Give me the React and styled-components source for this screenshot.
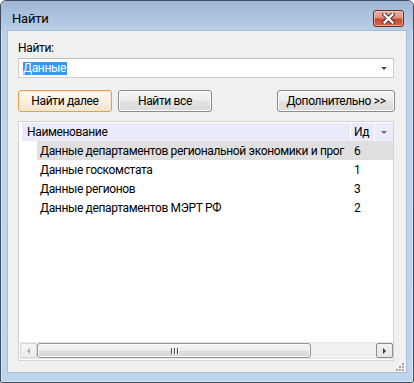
import React from 'react';
import styled, { createGlobalStyle } from 'styled-components';

const Global = createGlobalStyle`
  html, body { margin: 0; padding: 0; background: #ffffff; }
  body { font-family: Roboto, "Noto Sans", "DejaVu Sans", sans-serif; font-size: 12px; letter-spacing: -0.35px; color: #000; }
  * { box-sizing: border-box; }
`;

const Window = styled.div`
  width: 414px;
  height: 383px;
  border: 1px solid #3b4d5f;
  border-radius: 6px 6px 2px 2px;
  background: linear-gradient(#a6bdd8, #bcd3ea 40px, #bed5ec);
  box-shadow: inset 0 0 0 1px rgba(255, 255, 255, 0.45);
  display: flex;
  flex-direction: column;
  overflow: hidden;
`;

const TitleBar = styled.div`
  height: 29px;
  flex: none;
  display: flex;
  align-items: flex-start;
  justify-content: space-between;
  padding: 0 9px 0 11px;
  background: linear-gradient(#9fb7d4, #b8cfe8);
`;

const Title = styled.div`
  margin-top: 10px;
  font-size: 13px;
  line-height: 16px;
  letter-spacing: -0.2px;
  color: #000;
`;

const CloseButton = styled.div`
  margin-top: 9px;
  width: 31px;
  height: 17px;
  border: 1px solid #6b2a22;
  border-radius: 3px;
  background: linear-gradient(#ebb2a4 0%, #de8e7d 45%, #c8472f 55%, #d76a50 100%);
  box-shadow: inset 0 0 0 1px rgba(255, 215, 205, 0.55);
  display: flex;
  align-items: center;
  justify-content: center;
`;

const Frame = styled.div`
  flex: 1;
  display: flex;
  padding: 0 6px 9px 6px;
`;

const Client = styled.div`
  position: relative;
  flex: 1;
  background: #f0f0f0;
  border: 1px solid #a9bcd2;
  padding: 9px 12px 0 10px;
  display: flex;
  flex-direction: column;
`;

const Label = styled.div`
  line-height: 16px;
  height: 16px;
`;

const Combo = styled.div`
  margin-top: 2px;
  height: 20px;
  border: 1px solid #cfcfcf;
  border-top-color: #bdbdbd;
  background: #fff;
  display: flex;
  align-items: center;
  justify-content: space-between;
  padding: 0 6px 0 4px;
`;

const Selected = styled.span`
  background: #3399ff;
  color: #fff;
  line-height: 13px;
  height: 13px;
  padding: 0 1px 0 0;
`;

const Arrow = styled.span`
  width: 0;
  height: 0;
  border-left: 3px solid transparent;
  border-right: 3px solid transparent;
  border-top: 3px solid ${(p) => p.$color || '#4a4a4a'};
`;

const ButtonRow = styled.div`
  margin-top: 12px;
  display: flex;
  gap: 6px;
`;

const Button = styled.div`
  width: ${(p) => p.$w}px;
  height: 22px;
  margin-left: ${(p) => (p.$push ? 'auto' : '0')};
  margin-right: ${(p) => (p.$push ? '-1px' : '0')};
  border: 1px solid ${(p) => (p.$default ? '#e0a24e' : '#8a8a8a')};
  border-radius: 3px;
  background: ${(p) =>
    p.$default
      ? 'linear-gradient(#fdf8f0 0%, #f8efe1 50%, #f2e4cf 100%)'
      : 'linear-gradient(#f4f4f4 0%, #ececec 50%, #e2e2e2 51%, #dadada 100%)'};
  box-shadow: inset 0 0 0 1px ${(p) => (p.$default ? '#fbe7c6' : '#fbfbfb')};
  display: flex;
  align-items: center;
  justify-content: center;
  line-height: 14px;
`;

const ListBox = styled.div`
  margin-top: 9px;
  height: 240px;
  border: 1px solid #d4d4d4;
  background: #fff;
  padding-top: 1px;
  display: flex;
  flex-direction: column;
`;

const Header = styled.div`
  margin-left: 3px;
  height: 18px;
  flex: none;
  display: flex;
  gap: 1px;
`;

const HeadCell = styled.div`
  width: ${(p) => p.$w}px;
  flex: ${(p) => (p.$grow ? 1 : 'none')};
  background: #e9ebfb;
  padding-left: ${(p) => p.$pad}px;
  display: flex;
  align-items: center;
  justify-content: ${(p) => (p.$center ? 'center' : 'flex-start')};
  white-space: nowrap;
`;

const Rows = styled.div`
  flex: 1;
`;

const Row = styled.div`
  margin-left: 18px;
  height: 19px;
  display: flex;
  align-items: center;
  background: ${(p) => (p.$active ? '#e0e0e0' : 'transparent')};
`;

const NameCell = styled.div`
  width: 314px;
  flex: none;
  padding-left: 3px;
  overflow: hidden;
  white-space: nowrap;
`;

const IdCell = styled.div`
  padding-left: 3px;
`;

const ScrollBar = styled.div`
  height: 17px;
  flex: none;
  margin: 0 0 1px 1px;
  display: flex;
  background: #f0f0f0;
  border-top: 1px solid #e6e6e6;
  border-bottom: 1px solid #e6e6e6;
`;

const ScrollBtn = styled.div`
  width: 17px;
  flex: none;
  border: 1px solid ${(p) => (p.$enabled ? '#8c8c8c' : '#d6d6d6')};
  border-radius: 2px;
  background: ${(p) =>
    p.$enabled ? 'linear-gradient(#f3f3f3, #e4e4e4)' : 'linear-gradient(#f4f4f4, #ececec)'};
  display: flex;
  align-items: center;
  justify-content: center;
`;

const Thumb = styled.div`
  width: 274px;
  flex: none;
  border: 1px solid #959595;
  border-radius: 3px;
  background: linear-gradient(#f6f6f6 0%, #ececec 50%, #dedede 51%, #d8d8d8 100%);
  box-shadow: inset 0 0 0 1px #fbfbfb;
  display: flex;
  align-items: center;
  justify-content: center;
  gap: 2px;
`;

const Grip = styled.span`
  width: 1px;
  height: 6px;
  background: #4d4d4d;
  box-shadow: 1px 0 0 #fff;
`;

const Track = styled.div`
  flex: 1;
`;

const TriLeft = styled.span`
  width: 0;
  height: 0;
  border-top: 3px solid transparent;
  border-bottom: 3px solid transparent;
  border-right: 3px solid ${(p) => p.$color};
`;

const TriRight = styled.span`
  width: 0;
  height: 0;
  border-top: 3px solid transparent;
  border-bottom: 3px solid transparent;
  border-left: 3px solid ${(p) => p.$color};
`;

const SizeGrip = styled.svg`
  position: absolute;
  right: 1px;
  bottom: 0px;
`;

const rows = [
  { name: 'Данные департаментов региональной экономики и прог', id: 6, active: true },
  { name: 'Данные госкомстата', id: 1 },
  { name: 'Данные регионов', id: 3 },
  { name: 'Данные департаментов МЭРТ РФ', id: 2 },
];

export default function App() {
  const dots = [
    [8, 0], [8, 3], [5, 3], [8, 6], [5, 6], [2, 6],
  ];
  return (
    <>
      <Global />
      <Window>
        <TitleBar>
          <Title>Найти</Title>
          <CloseButton>
            <svg width="13" height="11" viewBox="0 0 13 11">
              <path d="M2.5 1.5 L10.5 9.5 M10.5 1.5 L2.5 9.5" stroke="#4b3431" strokeWidth="4.4" strokeLinecap="square" />
              <path d="M2.5 1.5 L10.5 9.5 M10.5 1.5 L2.5 9.5" stroke="#ffffff" strokeWidth="2.4" strokeLinecap="square" />
            </svg>
          </CloseButton>
        </TitleBar>
        <Frame>
          <Client>
            <Label>Найти:</Label>
            <Combo>
              <Selected>Данные</Selected>
              <Arrow />
            </Combo>
            <ButtonRow>
              <Button $w={94} $default>Найти далее</Button>
              <Button $w={94}>Найти все</Button>
              <Button $w={118} $push>Дополнительно &gt;&gt;</Button>
            </ButtonRow>
            <ListBox>
              <Header>
                <HeadCell $w={328} $pad={5}>Наименование</HeadCell>
                <HeadCell $w={23} $pad={3}>Ид</HeadCell>
                <HeadCell $w={16} $pad={0} $center $grow>
                  <Arrow $color="#6a6a6a" />
                </HeadCell>
              </Header>
              <Rows>
                {rows.map((r) => (
                  <Row key={r.id} $active={r.active}>
                    <NameCell>{r.name}</NameCell>
                    <IdCell>{r.id}</IdCell>
                  </Row>
                ))}
              </Rows>
              <ScrollBar>
                <ScrollBtn>
                  <TriLeft $color="#a8a8a8" />
                </ScrollBtn>
                <Thumb>
                  <Grip />
                  <Grip />
                  <Grip />
                </Thumb>
                <Track />
                <ScrollBtn $enabled>
                  <TriRight $color="#3a3a3a" />
                </ScrollBtn>
              </ScrollBar>
            </ListBox>
            <SizeGrip width="11" height="9" viewBox="0 0 11 9">
              {dots.map(([x, y], i) => (
                <g key={i}>
                  <rect x={x + 1} y={y + 1} width="2" height="2" fill="#ffffff" />
                  <rect x={x} y={y} width="2" height="2" fill="#a3a3a3" />
                </g>
              ))}
            </SizeGrip>
          </Client>
        </Frame>
      </Window>
    </>
  );
}
